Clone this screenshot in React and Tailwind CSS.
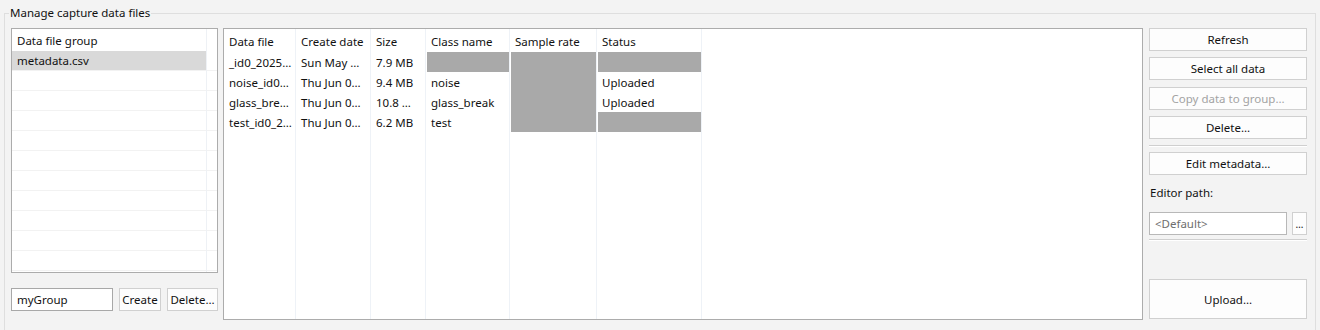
import React from "react";

const cols = [
  { name: "Data file", w: 72 },
  { name: "Create date", w: 75 },
  { name: "Size", w: 55 },
  { name: "Class name", w: 84 },
  { name: "Sample rate", w: 87 },
  { name: "Status", w: 105 },
];

const rows = [
  ["_id0_2025…", "Sun May …", "7.9 MB", null, null, null],
  ["noise_id0…", "Thu Jun 0…", "9.4 MB", "noise", null, "Uploaded"],
  ["glass_bre…", "Thu Jun 0…", "10.8 …", "glass_break", null, "Uploaded"],
  ["test_id0_2…", "Thu Jun 0…", "6.2 MB", "test", null, null],
];

function Btn({ children, disabled, className = "" }) {
  return (
    <div
      className={
        "flex items-center justify-center pt-[1px] border border-[#d0d0d0] bg-[#fdfdfd] " +
        (disabled ? "text-[#a3a3a3] " : "text-[#111111] ") +
        className
      }
    >
      {children}
    </div>
  );
}

function Sep() {
  return <div className="h-[2px] w-[158px] border-t border-[#cfcfcf] border-b border-b-white" />;
}

export default function App() {
  return (
    <div
      className="relative w-[1320px] h-[330px] overflow-hidden bg-[#f3f3f3] text-[11.5px] text-[#111111]"
      style={{ fontFamily: '"Noto Sans", "Segoe UI", sans-serif' }}
    >
      <div className="ml-[4px] mt-[13px] w-[1312px] h-[330px] border border-[#dedede] pl-[6px] pt-[14px] flex">
        {/* Left column */}
        <div className="w-[207px] flex flex-col">
          <div className="h-[245px] border border-[#acacac] bg-white flex">
            <div className="w-[194px] flex flex-col">
              <div className="h-[22px] flex items-center pl-[5px] pt-[2px]">Data file group</div>
              <div className="h-[20px] flex items-center pl-[5px] pt-[1px] bg-[#d9d9d9] border-b border-[#f2f2f2]">metadata.csv</div>
              {Array.from({ length: 10 }).map((_, i) => (
                <div key={i} className="h-[20px] shrink-0 border-b border-[#f2f2f2]" />
              ))}
            </div>
            <div className="flex-1 border-l border-[#eef1f5] flex flex-col">
              <div className="h-[22px]" />
              {Array.from({ length: 11 }).map((_, i) => (
                <div key={i} className="h-[20px] shrink-0 border-b border-[#f2f2f2]" />
              ))}
            </div>
          </div>
          <div className="mt-[15px] flex gap-[6px] h-[23px]">
            <div className="w-[102px] border border-[#a8a8a8] bg-white flex items-center pl-[5px] pt-[1px]">myGroup</div>
            <Btn className="w-[42px]">Create</Btn>
            <Btn className="w-[51px]">Delete…</Btn>
          </div>
        </div>

        {/* Table */}
        <div className="ml-[5px] w-[920px] h-[292px] border border-[#acacac] bg-white flex">
          {cols.map((c, ci) => (
            <div
              key={c.name}
              className="flex flex-col border-r border-[#eef2f7] shrink-0"
              style={{ width: c.w }}
            >
              <div className="h-[23px] flex items-center pl-[5px] pt-[2px] whitespace-nowrap overflow-hidden">{c.name}</div>
              {rows.map((r, ri) => {
                const v = r[ci];
                const gray = ci >= 3 && v === null;
                return (
                  <div
                    key={ri}
                    className={
                      "h-[20px] flex items-center pl-[5px] pt-[2px] whitespace-nowrap overflow-hidden " +
                      (gray ? "bg-[#a9a9a9] ml-[1px]" : "")
                    }
                  >
                    {v}
                  </div>
                );
              })}
            </div>
          ))}
          <div className="flex-1" />
        </div>

        {/* Right column */}
        <div className="ml-[6px] w-[158px] flex flex-col">
          <Btn className="h-[23px]">Refresh</Btn>
          <Btn className="h-[23px] mt-[6px]">Select all data</Btn>
          <Btn disabled className="h-[23px] mt-[7px]">Copy data to group…</Btn>
          <Btn className="h-[23px] mt-[6px]">Delete…</Btn>
          <div className="mt-[6px]"><Sep /></div>
          <Btn className="h-[23px] mt-[5px]">Edit metadata…</Btn>
          <div className="mt-[10px] h-[16px] flex items-center pl-[1px]">Editor path:</div>
          <div className="mt-[11px] flex h-[23px]">
            <div className="w-[138px] border border-[#b8b8b8] bg-white flex items-center pl-[5px] pt-[1px] text-[#6e6e6e]">&lt;Default&gt;</div>
            <Btn className="ml-[5px] w-[15px] text-[10px] leading-none">…</Btn>
          </div>
          <div className="mt-[4px]"><Sep /></div>
          <Btn className="h-[40px] mt-[38px]">Upload…</Btn>
        </div>
      </div>
      <div className="absolute left-[9px] top-[5px] px-[1px] bg-[#f3f3f3] leading-[16px]">Manage capture data files</div>
    </div>
  );
}
